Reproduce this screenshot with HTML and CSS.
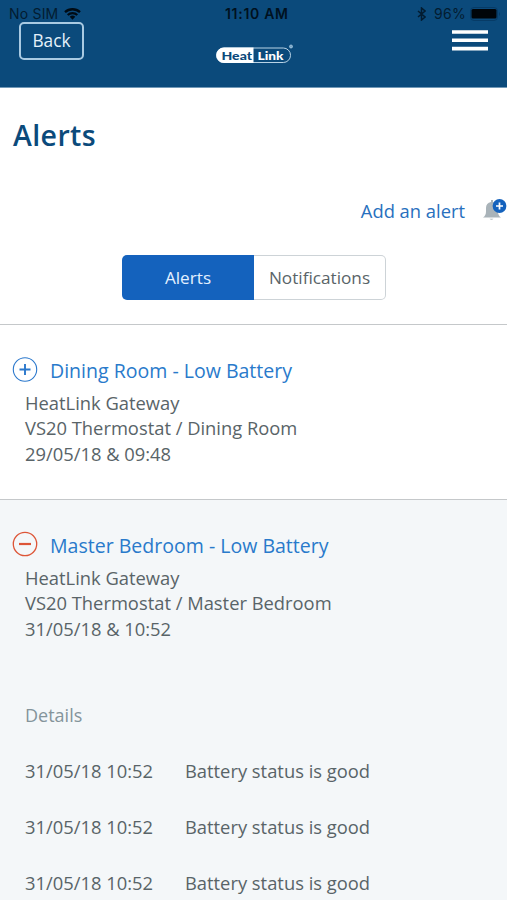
FILE: index.html
```html
<!DOCTYPE html>
<html lang="en">
<head>
<meta charset="utf-8">
<title>Alerts</title>
<link rel="stylesheet" href="styles.css">
</head>
<body>
<header class="header">
  <div class="status">
    <span class="carrier">No SIM</span>
    <svg class="wifi" width="17" height="12" viewBox="0 0 17 12"><path d="M1 4.200a11 11 0 0 1 15 0M3.700 7a7.200 7.200 0 0 1 9.600 0" fill="none" stroke="currentColor" stroke-width="2.300"/><path d="M5.700 8.800a4.200 4.200 0 0 1 5.600 0L8.500 11.700z" fill="currentColor"/></svg>
    <span class="clock">11:10 AM</span>
    <svg class="bluetooth" width="9" height="14" viewBox="0 0 9 14"><path d="M1 4l7 6-3.500 3V1L8 4l-7 6" fill="none" stroke="currentColor" stroke-width="1.500"/></svg>
    <span class="percent">96%</span>
    <svg class="battery" width="32" height="14" viewBox="0 0 32 14"><rect x=".5" y=".5" width="27" height="13" rx="3.500" fill="none" stroke="#073b66"/><rect x="1.500" y="2" width="25" height="9.500" rx="1.500" fill="#000509"/><path d="M29 5q2 2 0 4z" fill="#073b66"/></svg>
  </div>
  <nav class="nav">
    <button class="back">Back</button>
    <svg class="logo" width="80" height="22" viewBox="0 0 80 22"><rect x="2.500" y="4" width="74" height="14.500" rx="7.200" fill="#0b4a7b" stroke="#b9d3e6"/><path d="M39.500 3.500V19H10a7.700 7.700 0 0 1 0-15.500z" fill="#fff"/><text class="logo-text logo-heat" x="7.500" y="15.800" textLength="30.500" lengthAdjust="spacingAndGlyphs">Heat</text><text class="logo-text logo-link" x="43.500" y="15.800" textLength="26" lengthAdjust="spacingAndGlyphs">Link</text><circle cx="77" cy="2.500" r="1.500" fill="#78a6c8" stroke="#a9c9df" stroke-width=".8"/></svg>
    <svg class="menu" width="36" height="21" viewBox="0 0 36 21"><path d="M0 2h36M0 10.300h36M0 18.600h36" stroke="#fff" stroke-width="3.600"/></svg>
  </nav>
</header>
<main>
  <h1 class="title">Alerts</h1>
  <div class="add">
    <a class="add-link">Add an alert</a>
    <svg width="25" height="24" viewBox="0 0 25 24"><path d="M1 18.500q3-2 3-6V9q0-5 5-6V1h2v2q5 1 5 6v3.500q0 4 3 6zM7.500 19.700h4q-2 2.300-4 0z" fill="#a9b3b9"/><circle cx="17.500" cy="7" r="6.900" fill="#1462bd"/><path d="M14 7h7M17.500 3.500v7" stroke="#fff" stroke-width="1.700"/></svg>
  </div>
  <div class="tabs"><button class="tab active">Alerts</button><button class="tab">Notifications</button></div>
  <section class="alert">
    <h2 class="alert-head">
      <svg class="toggle" width="26" height="26" viewBox="0 0 26 26" stroke="#2b78cc"><circle cx="13" cy="11.500" r="11.700" fill="none" stroke-width="1.100"/><path d="M7.500 11.500h11M13 6v11" stroke-width="1.900"/></svg>
      <span class="alert-name">Dining Room - Low Battery</span>
    </h2>
    <div class="info">HeatLink Gateway<br>VS20 Thermostat / Dining Room<br>29/05/18 &amp; 09:48</div>
  </section>
  <section class="alert open">
    <h2 class="alert-head">
      <svg class="toggle" width="26" height="26" viewBox="0 0 26 26" stroke="#dd5537"><circle cx="13" cy="11" r="11.700" fill="none" stroke-width="1.300"/><path d="M7 11h12" stroke-width="2.200"/></svg>
      <span class="alert-name">Master Bedroom - Low Battery</span>
    </h2>
    <div class="info">HeatLink Gateway<br>VS20 Thermostat / Master Bedroom<br>31/05/18 &amp; 10:52</div>
    <div class="details">
      <h3 class="details-title">Details</h3>
      <div class="row"><span>31/05/18 10:52</span><span>Battery status is good</span></div>
      <div class="row"><span>31/05/18 10:52</span><span>Battery status is good</span></div>
      <div class="row"><span>31/05/18 10:52</span><span>Battery status is good</span></div>
    </div>
  </section>
</main>
</body>
</html>
```
FILE: styles.css
```css
* { box-sizing: border-box; }
body { margin: 0; height: 900px; overflow: hidden; background: #fff; color: #596468; font: 18.35px/25.6px "Open Sans", sans-serif; }
h1, h2, h3 { margin: 0; font-weight: 400; }
button { padding: 0; font: inherit; }
svg { display: block; flex: none; }
.header { height: 88px; background: #0b4a7b; border-bottom: 1px solid #7299b7; }
.status { display: grid; grid-template-columns: 55px 161px 192px 17px 36px 1fr; align-items: center; height: 22px; padding: 6px 0 0 9px; color: #031c30; font: 14px/16px Inter, sans-serif; }
.wifi { color: #000b14; }
.carrier { letter-spacing: .2px; }
.clock { font-weight: 600; letter-spacing: .7px; color: #00111f; white-space: nowrap; }
.percent { letter-spacing: .3px; }
.nav { display: grid; grid-template-columns: 65px 1fr 36px; align-items: start; padding: 0 19px; }
.back { height: 38px; border: 2px solid #a9cae2; border-radius: 5px; background: transparent; color: #e5f1fa; font-size: 17.3px; line-height: 32px; }
.logo { margin: 22px 0 0 130px; }
.logo-text { font: 900 12px Lato, sans-serif; }
.logo-heat { fill: #0b4a7b; }
.logo-link { fill: #fff; }
.menu { margin: 8px 0 0 0; }
.title { padding: 28px 13px 0; color: #0b4a7b; font-size: 28.5px; font-weight: 600; letter-spacing: .4px; line-height: 38px; }
.add { display: flex; justify-content: flex-end; align-items: center; gap: 17px; height: 26px; margin-top: 44px; }
.add-link { color: #2870be; }
.tabs { display: grid; grid-template-columns: 1fr 1fr; width: 264px; height: 45px; margin: 31px 0 0 122px; font-size: 17.2px; }
.tab { border: 1px solid #cdd3d7; border-left: 0; border-radius: 0 5px 5px 0; background: #fff; color: #596468; }
.tab.active { border: 0; border-radius: 5px 0 0 5px; background: #1462bd; color: #e2f0ff; }
.alert { height: 175px; border-top: 1px solid #c5c8ca; padding-top: 33px; }
.tabs + .alert { margin-top: 24px; }
.alert.open { height: 401px; background: #f4f7f9; }
.alert-head { display: flex; align-items: center; gap: 12px; height: 26px; padding-left: 12px; color: #297acb; font-size: 19.55px; }
.toggle { overflow: visible; }
.info { padding: 5.500px 25px 0; }
.details { padding: 61px 25px 0; }
.details-title { color: #84949b; font-size: 18px; line-height: 26px; margin-bottom: 15px; }
.row { display: grid; grid-template-columns: 160px 1fr; height: 56px; align-items: center; }
```
